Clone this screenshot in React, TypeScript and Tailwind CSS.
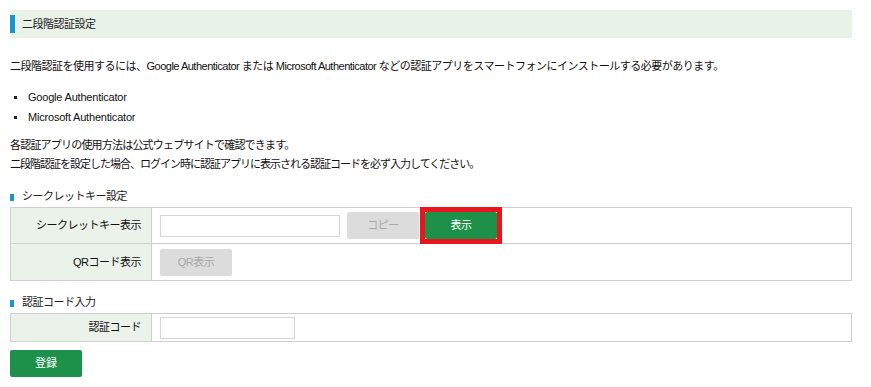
import React from "react";

const font = { fontFamily: '"Liberation Sans", "Noto Sans CJK JP", sans-serif' };

function SectionTitle({ children }: { children: React.ReactNode }) {
  return (
    <div className="flex items-end h-[20px] leading-[20px] text-[11px] tracking-[-0.5px] text-[#222]">
      <span className="w-[4px] h-[7px] bg-[#1a95d2] mb-[5px] mr-[8px]" />
      <span>{children}</span>
    </div>
  );
}

function GrayButton({ children }: { children: React.ReactNode }) {
  return (
    <button className="w-[72px] h-[27px] bg-[#dcdcdc] text-[#a8a8a8] text-[11px] rounded-[2px] flex items-center justify-center">
      {children}
    </button>
  );
}

export default function App() {
  return (
    <div className="bg-white min-h-[387px] pl-[10px] pt-[10px] text-[#111]" style={font}>
      <div className="w-[842px]">
        <div className="h-[28px] bg-[#e8f2e8] flex items-center">
          <span className="w-[5px] h-[18px] bg-[#1a95d2]" />
          <span className="ml-[7px] text-[11px] tracking-[-0.5px] text-[#222]">二段階認証設定</span>
        </div>

        <p className="mt-[18px] leading-[20px] text-[11px] tracking-[-0.5px]">
          二段階認証を使用するには、Google Authenticator または Microsoft Authenticator などの認証アプリをスマートフォンにインストールする必要があります。
        </p>

        <ul className="mt-[11px] text-[11px] tracking-[-0.2px]">
          <li className="flex items-center h-[20px]">
            <span className="ml-[4px] w-[3px] h-[3px] bg-[#222]" />
            <span className="ml-[11px]">Google Authenticator</span>
          </li>
          <li className="flex items-center h-[20px]">
            <span className="ml-[4px] w-[3px] h-[3px] bg-[#222]" />
            <span className="ml-[11px]">Microsoft Authenticator</span>
          </li>
        </ul>

        <div className="mt-[9px] leading-[19px] text-[11px]">
          <p className="tracking-[-0.8px]">各認証アプリの使用方法は公式ウェブサイトで確認できます。</p>
          <p className="tracking-[-1px]">二段階認証を設定した場合、ログイン時に認証アプリに表示される認証コードを必ず入力してください。</p>
        </div>

        <div className="mt-[12px]">
          <SectionTitle>シークレットキー設定</SectionTitle>
        </div>

        <div className="mt-[1px] border border-[#cfcfcf] text-[11px] tracking-[-0.5px]">
          <div className="flex h-[36px] border-b border-[#cfcfcf]">
            <div className="w-[141px] bg-[#eaf2e9] border-r border-[#cfcfcf] flex items-center justify-end pr-[10px]">
              シークレットキー表示
            </div>
            <div className="flex items-center pl-[8px]">
              <input className="w-[180px] h-[22px] border border-[#d6d6d6] bg-white outline-none" />
              <div className="ml-[7px]">
                <GrayButton>コピー</GrayButton>
              </div>
              <div className="ml-[6px] relative">
                <button className="w-[72px] h-[27px] bg-[#1d9049] text-white text-[11px] rounded-[2px] flex items-center justify-center">
                  表示
                </button>
                <span className="absolute -inset-[5px] border-[5px] border-[#e8141e] pointer-events-none" />
              </div>
            </div>
          </div>
          <div className="flex h-[36px]">
            <div className="w-[141px] bg-[#eaf2e9] border-r border-[#cfcfcf] flex items-center justify-end pr-[10px]">
              QRコード表示
            </div>
            <div className="flex items-center pl-[8px]">
              <GrayButton>QR表示</GrayButton>
            </div>
          </div>
        </div>

        <div className="mt-[11px]">
          <SectionTitle>認証コード入力</SectionTitle>
        </div>

        <div className="mt-[1px] border border-[#cfcfcf] text-[11px] tracking-[-0.5px]">
          <div className="flex h-[27px]">
            <div className="w-[141px] bg-[#eaf2e9] border-r border-[#cfcfcf] flex items-center justify-end pr-[10px]">
              認証コード
            </div>
            <div className="flex items-center pl-[8px]">
              <input className="w-[135px] h-[22px] border border-[#d6d6d6] bg-white outline-none" />
            </div>
          </div>
        </div>

        <button className="mt-[8px] w-[72px] h-[27px] bg-[#1d9049] text-white text-[11px] rounded-[2px] flex items-center justify-center">
          登録
        </button>
      </div>
    </div>
  );
}
